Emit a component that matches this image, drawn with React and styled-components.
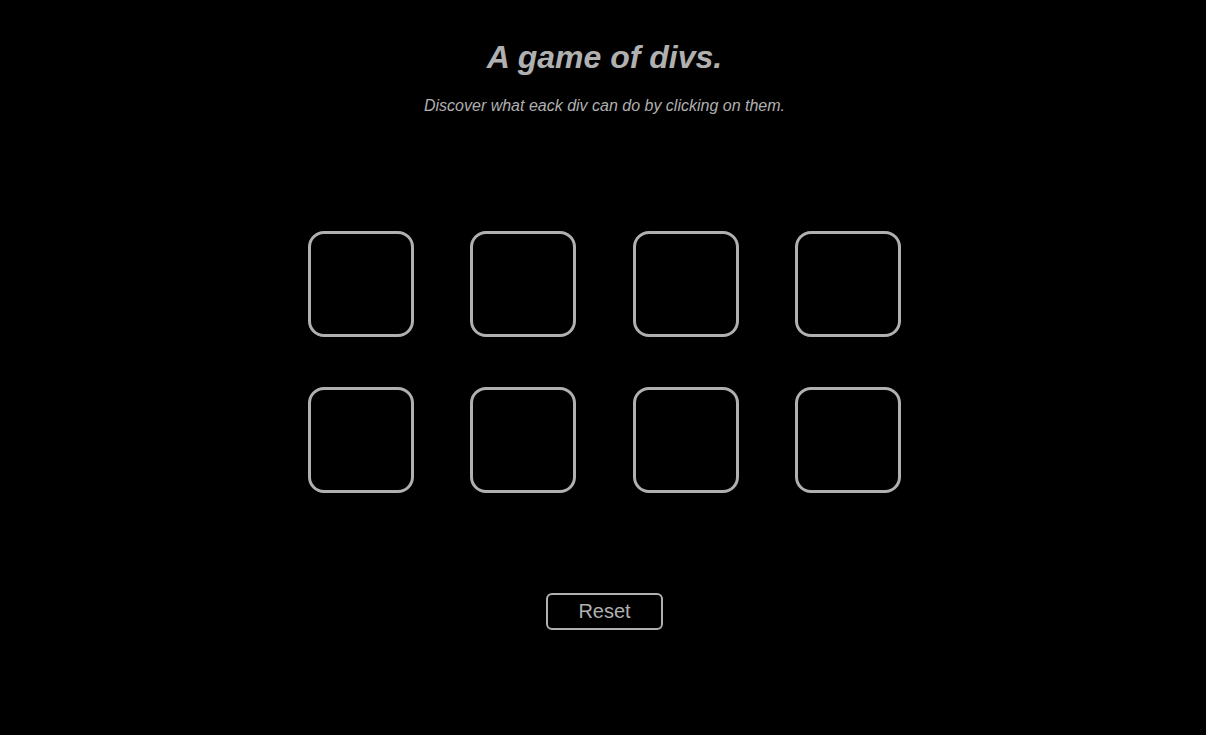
import React from 'react';
import styled, { createGlobalStyle } from 'styled-components';

const GlobalStyle = createGlobalStyle`
  html, body {
    margin: 0;
    padding: 0;
    background: #000;
  }
  body {
    font-family: "Liberation Sans", Arial, sans-serif;
    color: #b0b0b0;
  }
`;

const Page = styled.main`
  min-height: 735px;
  display: flex;
  flex-direction: column;
  align-items: center;
  padding: 37px 0 0 3px;
  box-sizing: border-box;
`;

const Title = styled.h1`
  margin: 0;
  font-size: 32px;
  line-height: 40px;
  font-weight: 700;
  font-style: italic;
  color: #b0b0b0;
`;

const Subtitle = styled.p`
  margin: 19px 0 0;
  font-size: 16px;
  line-height: 20px;
  font-style: italic;
  color: #b0b0b0;
`;

const Board = styled.div`
  margin-top: 115px;
  display: grid;
  grid-template-columns: repeat(4, 106px);
  column-gap: 56.33px;
  row-gap: 50px;
`;

const Tile = styled.div`
  width: 106px;
  height: 106px;
  box-sizing: border-box;
  border: 3px solid #b0b0b0;
  border-radius: 16px;
  cursor: pointer;
`;

const ResetButton = styled.button`
  margin-top: 100px;
  width: 117px;
  height: 37px;
  box-sizing: border-box;
  background: transparent;
  border: 2px solid #b0b0b0;
  border-radius: 6px;
  color: #b0b0b0;
  font-family: "Liberation Sans", Arial, sans-serif;
  font-size: 20px;
  padding: 0;
  cursor: pointer;
`;

const tiles = Array.from({ length: 8 }, (_, i) => i);

export default function App() {
  return (
    <>
      <GlobalStyle />
      <Page>
        <Title>A game of divs.</Title>
        <Subtitle>Discover what eack div can do by clicking on them.</Subtitle>
        <Board>
          {tiles.map(i => <Tile key={i} />)}
        </Board>
        <ResetButton>Reset</ResetButton>
      </Page>
    </>
  );
}
